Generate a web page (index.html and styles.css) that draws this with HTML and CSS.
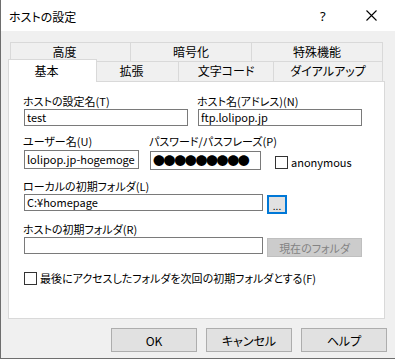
FILE: index.html
```html
<!DOCTYPE html>
<html lang="ja">
<head>
    <meta charset="UTF-8">
    <title>ホストの設定</title>
    <link rel="stylesheet" href="styles.css">
</head>
<body>
    <div class="dialog">
        <div class="titlebar">
            <span class="title">ホストの設定</span>
            <span class="help-btn">?</span>
            <span class="close-btn">
                <svg width="11" height="11" viewBox="0 0 11 11"><path d="M0.5 0.5 L10.5 10.5 M10.5 0.5 L0.5 10.5" stroke="#000" stroke-width="1.1" fill="none"/></svg>
            </span>
        </div>

        <div class="content">
            <div class="tabs">
                <div class="tab-row back">
                    <div class="tab w1">高度</div>
                    <div class="tab w2">暗号化</div>
                    <div class="tab w3">特殊機能</div>
                </div>
                <div class="tab-row front">
                    <div class="tab active">基本</div>
                    <div class="tab w5">拡張</div>
                    <div class="tab w6">文字コード</div>
                    <div class="tab w7">ダイアルアップ</div>
                </div>
            </div>

            <div class="panel">
                <div class="group g1">
                    <div class="field half">
                        <div class="label">ホストの設定名(T)</div>
                        <div class="input">test</div>
                    </div>
                    <div class="field half">
                        <div class="label">ホスト名(アドレス)(N)</div>
                        <div class="input">ftp.lolipop.jp</div>
                    </div>
                </div>

                <div class="group g2">
                    <div class="field user">
                        <div class="label">ユーザー名(U)</div>
                        <div class="input tall">lolipop.jp-hogemoge</div>
                    </div>
                    <div class="field pass">
                        <div class="label">パスワード/パスフレーズ(P)</div>
                        <div class="pass-row">
                            <div class="input tall dots">●●●●●●●●●</div>
                            <label class="check anon"><span class="box"></span>anonymous</label>
                        </div>
                    </div>
                </div>

                <div class="group g3">
                    <div class="field wide">
                        <div class="label">ローカルの初期フォルダ(L)</div>
                        <div class="with-btn">
                            <div class="input path">C:¥homepage</div>
                            <button class="btn browse">...</button>
                        </div>
                    </div>
                </div>

                <div class="group g4">
                    <div class="field wide">
                        <div class="label">ホストの初期フォルダ(R)</div>
                        <div class="with-btn">
                            <div class="input path"></div>
                            <button class="btn current" disabled>現在のフォルダ</button>
                        </div>
                    </div>
                </div>

                <label class="check last"><span class="box"></span>最後にアクセスしたフォルダを次回の初期フォルダとする(F)</label>
            </div>

            <div class="buttons">
                <button class="btn dlg">OK</button>
                <button class="btn dlg">キャンセル</button>
                <button class="btn dlg">ヘルプ</button>
            </div>
        </div>
    </div>
</body>
</html>
```

FILE: styles.css
```css
body {
    margin: 0;
    background: #fff;
    font-family: "Noto Sans CJK JP", "Noto Sans", sans-serif;
    font-size: 12px;
    font-feature-settings: "palt";
    color: #000;
}
.dialog {
    width: 395px;
    height: 359px;
    box-sizing: border-box;
    border-left: 1px solid #6e6e6e;
    border-bottom: 1px solid #6e6e6e;
    background: #f0f0f0;
    overflow: hidden;
}
.titlebar {
    height: 31px;
    background: #fff;
    display: flex;
    align-items: center;
    padding-left: 8px;
}
.title {
    flex: 1;
    font-size: 12px;
    line-height: 14px;
    padding-top: 2px;
}
.help-btn {
    font-family: "Noto Sans", sans-serif;
    font-size: 13px;
    width: 10px;
    margin-right: 36px;
    padding-top: 1px;
}
.close-btn {
    width: 11px;
    height: 11px;
    margin-right: 18px;
    display: flex;
}
.content {
    padding: 11px 8px 0 7px;
}
.tab-row {
    display: flex;
}
.tab-row.back {
    height: 19px;
    margin-left: 2px;
}
.tab-row.front {
    height: 20px;
    align-items: flex-start;
}
.tab {
    box-sizing: border-box;
    height: 100%;
    border: 1px solid #d9d9d9;
    border-bottom: none;
    background: #f0f0f0;
    text-align: center;
    line-height: 18px;
    margin-right: -1px;
}
.w1 { width: 121px; padding-right: 12px; }
.w2 { width: 122px; }
.w3 { width: 132px; }
.w5 { width: 83px; padding-right: 12px; }
.w6 { width: 96px; }
.w7 { width: 110px; }
.tab.active {
    position: relative;
    z-index: 1;
    width: 89px;
    height: 23px;
    margin-top: -2px;
    background: #fff;
    line-height: 22px;
    padding-right: 12px;
}
.panel {
    box-sizing: border-box;
    width: 377px;
    height: 238px;
    border: 1px solid #d9d9d9;
    background: #fff;
    padding: 12px 0 0 15px;
    font-size: 11px;
}
.label {
    line-height: 14px;
    height: 14px;
    margin-left: -1px;
    white-space: nowrap;
}
.input {
    box-sizing: border-box;
    height: 17px;
    border: 1px solid #7a7a7a;
    background: #fff;
    padding: 0 2px;
    line-height: 15px;
    white-space: nowrap;
    overflow: hidden;
}
.input.tall {
    height: 19px;
    line-height: 17px;
}
.group {
    display: flex;
}
.g1 { gap: 10px; }
.g1 .label { margin-bottom: 1px; }
.half { width: 164px; }
.g2 { margin-top: 8px; gap: 11px; }
.g2 .label { margin-bottom: 2px; }
.user { width: 115px; }
.pass-row {
    display: flex;
    align-items: center;
}
.dots {
    width: 111px;
    padding-left: 2px;
    font-size: 12px;
    letter-spacing: -1.4px;
    line-height: 17px;
}
.g3 { margin-top: 9px; }
.g4 { margin-top: 8px; }
.g3 .label, .g4 .label { margin-bottom: 1px; }
.with-btn {
    display: flex;
    align-items: flex-start;
    gap: 4px;
}
.path { width: 239px; }
.btn {
    font-family: inherit;
    font-feature-settings: "palt";
    font-size: 12px;
    background: #e1e1e1;
    border: 1px solid #adadad;
    box-sizing: border-box;
    padding: 0;
    color: #000;
}
.browse {
    width: 20px;
    height: 19px;
    margin-top: 1px;
    border: 2px solid #0078d7;
    font-size: 10px;
    line-height: 18px;
}
.current {
    width: 95px;
    height: 19px;
    margin-top: 1px;
    background: #cccccc;
    border-color: #bfbfbf;
    color: #838383;
    font-size: 11px;
    line-height: 16px;
}
.check {
    display: flex;
    align-items: center;
    white-space: nowrap;
}
.box {
    width: 13px;
    height: 13px;
    box-sizing: border-box;
    border: 1px solid #333;
    background: #fff;
    flex-shrink: 0;
}
.anon {
    margin-left: 14px;
    gap: 3px;
    padding-top: 4px;
}
.last {
    margin-top: 13px;
    gap: 3px;
}
.buttons {
    display: flex;
    justify-content: flex-end;
    gap: 9px;
    margin-top: 9px;
}
.dlg {
    width: 86px;
    height: 24px;
}
```
